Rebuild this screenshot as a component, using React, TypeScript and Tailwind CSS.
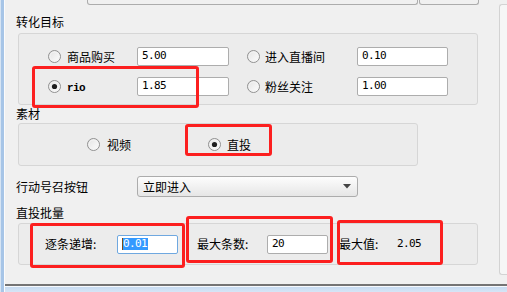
import React from 'react'

const cjk = "font-['Noto_Sans_CJK_SC','Noto_Sans',sans-serif]"
const mono = "font-['DejaVu_Sans_Mono','Liberation_Mono',monospace]"

const Radio = ({ checked }: { checked?: boolean }) => (
  <svg width="13" height="13" viewBox="0 0 13 13" className="shrink-0">
    <defs>
      <linearGradient id="radioFill" x1="0" y1="0" x2="1" y2="1">
        <stop offset="0" stopColor="#e2e2e2" />
        <stop offset="1" stopColor="#ffffff" />
      </linearGradient>
    </defs>
    <circle cx="6.5" cy="6.5" r="6" fill="url(#radioFill)" stroke="#909090" />
    <circle cx="6.5" cy="6.5" r="4.5" fill="none" stroke="#f4f4f4" />
    {checked && <circle cx="6.5" cy="6.5" r="2.6" fill="#1e1e1e" />}
  </svg>
)

const Field = ({ value, className = '' }: { value: string; className?: string }) => (
  <div
    className={`flex h-[19px] shrink-0 items-center rounded-[2px] border border-[#adadad] bg-white pl-[4px] text-[11px] tracking-[-0.6px] text-black ${mono} ${className}`}
  >
    {value}
  </div>
)

const Option = ({ label, checked, className = '' }: { label: React.ReactNode; checked?: boolean; className?: string }) => (
  <div className={`flex shrink-0 items-center gap-[6px] ${className}`}>
    <Radio checked={checked} />
    <span className="leading-[16px]">{label}</span>
  </div>
)

const Mark = ({ className }: { className: string }) => (
  <div className={`pointer-events-none absolute rounded-[3px] border-[3px] border-[#fc1f1f] ${className}`} />
)

const App = () => {
  return (
    <div className={`relative flex h-[292px] w-[507px] overflow-hidden bg-[#f0f0f0] text-[12px] text-black ${cjk}`}>
      {/* window frame, left */}
      <div className="flex h-full w-[5px] shrink-0">
        <div className="w-[1px] bg-[#d6e4f3]" />
        <div className="w-[3px] bg-[#a7c5e7]" />
        <div className="w-[1px] bg-[#fbfbfb]" />
      </div>

      <div className="flex flex-1 flex-col">
        <div className="flex h-[284px]">
          <div className="flex flex-1 flex-col">
            {/* cut off boxes above */}
            <div className="flex h-[5px]">
              <div className="ml-[82px] w-[331px] rounded-b-[3px] border-x border-b border-[#acacac]" />
              <div className="ml-[1px] w-[60px] rounded-b-[3px] border-x border-b border-[#acacac]" />
            </div>

            <div className="mt-[9px] pl-[11px] leading-[16px]">转化目标</div>
            <div className="mt-[3px] ml-[13px] flex h-[72px] w-[460px] flex-col gap-[11px] rounded-[3px] border border-[#d6d6d6] bg-[#ececec] pt-[13px] pl-[29px]">
              <div className="flex items-center">
                <Option label="商品购买" className="w-[89px]" />
                <Field value="5.00" className="w-[92px]" />
                <Option label="进入直播间" className="ml-[18px] w-[110px] !gap-[5px]" />
                <Field value="0.10" className="w-[91px]" />
              </div>
              <div className="flex items-center">
                <Option
                  checked
                  label={<span className="font-['Liberation_Mono',monospace] text-[11px] font-bold tracking-[-0.6px]">rio</span>}
                  className="w-[89px]"
                />
                <Field value="1.85" className="w-[92px]" />
                <Option label="粉丝关注" className="ml-[18px] w-[110px] !gap-[5px]" />
                <Field value="1.00" className="w-[91px]" />
              </div>
            </div>

            <div className="mt-[1px] pl-[11px] leading-[16px]">素材</div>
            <div className="mt-[1px] ml-[13px] flex h-[43px] w-[400px] items-center rounded-[3px] border border-[#d6d6d6] bg-[#ececec] pl-[68px]">
              <Option label="视频" className="w-[121px] !gap-[7px]" />
              <Option checked label="直投" />
            </div>

            <div className="mt-[10px] flex h-[21px] items-center pl-[11px]">
              <span className="w-[121px] leading-[16px]">行动号召按钮</span>
              <div className="flex h-[21px] w-[221px] items-center justify-between rounded-[3px] border border-[#acacac] bg-gradient-to-b from-[#fdfdfd] to-[#e6e6e6] pr-[6px] pl-[5px]">
                <span className="leading-[16px]">立即进入</span>
                <svg width="8" height="5" viewBox="0 0 8 5">
                  <path d="M0 0 H8 L4 4.5 Z" fill="#444" />
                </svg>
              </div>
            </div>

            <div className="mt-[8px] pl-[11px] leading-[16px]">直投批量</div>
            <div className="mt-[2px] ml-[13px] flex h-[42px] w-[460px] items-center rounded-[3px] border border-[#d6d6d6] bg-[#ececec] pl-[26px]">
              <span className="w-[72px] shrink-0 leading-[16px]">逐条递增:</span>
              <div className={`flex h-[19px] w-[61px] shrink-0 items-center rounded-[2px] border border-[#6fa8e0] bg-white pl-[4px] text-[11px] tracking-[-0.6px] ${mono}`}>
                <span className="border-l border-[#7a4a1a] bg-[#3399ff] pr-[1px] leading-[12px] text-white">0.01</span>
              </div>
              <span className="ml-[19px] w-[70px] shrink-0 leading-[16px]">最大条数:</span>
              <Field value="20" className="w-[61px]" />
              <span className="ml-[11px] w-[58px] shrink-0 leading-[16px]">最大值:</span>
              <span className={`text-[11px] tracking-[-0.6px] ${mono}`}>2.05</span>
            </div>
          </div>

          {/* right neighbour panel */}
          <div className="mt-[4px] h-[271px] w-[8px] rounded-l-[3px] border-y border-l border-[#d3d3d3] bg-[#f6f6f6]" />
        </div>

        {/* window frame, bottom */}
        <div className="h-[2px] bg-[#747474]" />
        <div className="h-[1px] bg-[#f6f9fd]" />
        <div className="flex-1 bg-gradient-to-b from-[#c7dbf1] to-[#d6e5f6]" />
      </div>

      <Mark className="top-[66px] left-[32px] h-[42px] w-[167px]" />
      <Mark className="top-[124px] left-[185px] h-[32px] w-[87px]" />
      <Mark className="top-[223px] left-[30px] h-[45px] w-[155px]" />
      <Mark className="top-[216px] left-[186px] h-[47px] w-[147px]" />
      <Mark className="top-[220px] left-[337px] h-[45px] w-[106px]" />
    </div>
  )
}

export default App
